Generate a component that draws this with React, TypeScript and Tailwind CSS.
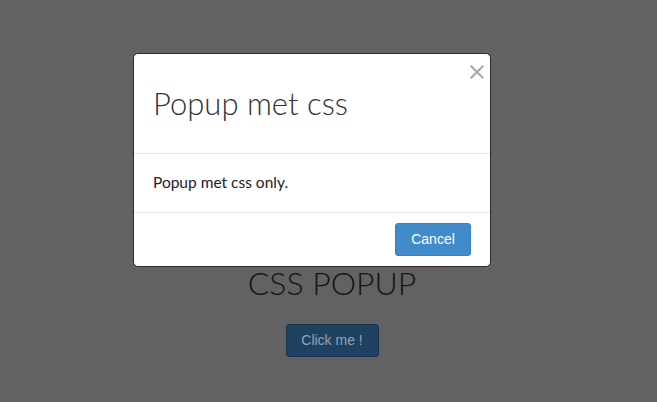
export default function App() {
  return (
    <div className="relative h-[402px] w-[657px] overflow-hidden bg-[#626262]" style={{ fontFamily: "Lato, 'Open Sans', sans-serif" }}>
      {/* page behind the overlay */}
      <div className="flex flex-col items-center pl-[7px] pt-[263px]">
        <h1 className="text-[32px] font-light leading-[40px] text-[#141414]">CSS POPUP</h1>
        <button
          className="mt-[21px] h-[33px] w-[93px] rounded-[3px] border border-[#173450] bg-[#1f4263] text-[14px] text-[#95a4b3]"
          style={{ fontFamily: "'Liberation Sans', Arial, sans-serif" }}
        >
          Click me !
        </button>
      </div>

      {/* modal */}
      <div className="absolute left-[133px] top-[53px] w-[358px] rounded-[5px] border border-[#2a2a2a] bg-white">
        <div className="relative h-[100px] border-b border-[#e5e5e5] px-[19px] pt-[29px]">
          <h2 className="text-[31px] font-light leading-[40px] text-[#333]">Popup met css</h2>
          <button className="absolute right-[5px] top-[10px] p-[1px]">
            <svg width="14" height="14" viewBox="0 0 14 14" stroke="#a9a9a9" strokeWidth="2.2" strokeLinecap="square">
              <path d="M1.5 1.5L12.5 12.5M12.5 1.5L1.5 12.5" />
            </svg>
          </button>
        </div>
        <div className="flex h-[59px] items-center border-b border-[#e5e5e5] px-[19px] text-[15.5px] text-[#222]">
          Popup met css only.
        </div>
        <div className="flex justify-end px-[19px] pb-[10px] pt-[10px]">
          <button
            className="h-[33px] w-[76px] rounded-[3px] border border-[#3b7fbd] bg-[#428bca] text-[14px] text-white"
            style={{ fontFamily: "'Liberation Sans', Arial, sans-serif" }}
          >
            Cancel
          </button>
        </div>
      </div>
    </div>
  );
}
